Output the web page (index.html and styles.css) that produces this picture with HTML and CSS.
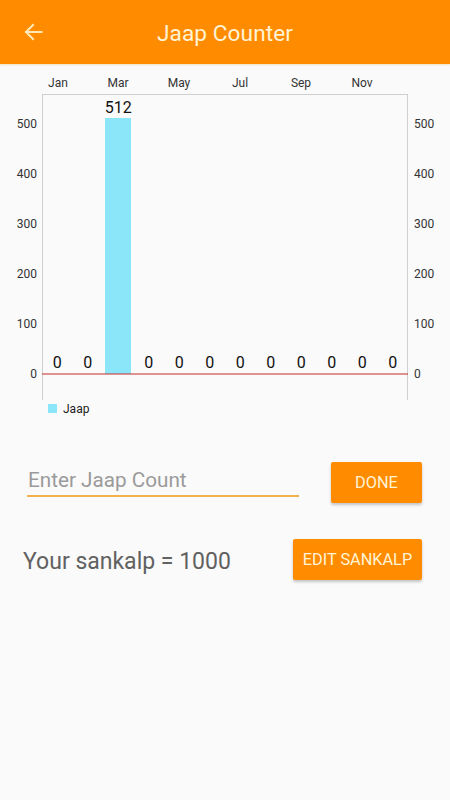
FILE: index.html
```html
<!DOCTYPE html>
<html>
<head>
<meta charset="utf-8">
<link rel="stylesheet" href="styles.css">
</head>
<body>
<header class="appbar">
  <svg class="back" width="20" height="20" viewBox="0 0 20 20"><path d="M18.5 10H3M10 3L3 10L10 17" fill="none" stroke="#FFE9B8" stroke-width="2" stroke-linecap="square"/></svg>
  <h1 class="title">Jaap Counter</h1>
</header>
<main class="content">
  <svg class="chart" width="450" height="360" viewBox="0 64 450 360">
    <g class="months">
      <text x="58" y="87">Jan</text>
      <text x="118" y="87">Mar</text>
      <text x="179" y="87">May</text>
      <text x="240" y="87">Jul</text>
      <text x="301" y="87">Sep</text>
      <text x="362" y="87">Nov</text>
    </g>
    <line x1="42" y1="94.5" x2="408" y2="94.5" stroke="#cfcfcf" stroke-width="1"/>
    <line x1="42.5" y1="94" x2="42.5" y2="400" stroke="#cfcfcf" stroke-width="1"/>
    <line x1="407.5" y1="94" x2="407.5" y2="400" stroke="#cfcfcf" stroke-width="1"/>
    <g class="yl">
      <text x="37" y="128">500</text>
      <text x="37" y="178">400</text>
      <text x="37" y="228">300</text>
      <text x="37" y="278">200</text>
      <text x="37" y="328">100</text>
      <text x="37" y="378">0</text>
    </g>
    <g class="yr">
      <text x="414" y="128">500</text>
      <text x="414" y="178">400</text>
      <text x="414" y="228">300</text>
      <text x="414" y="278">200</text>
      <text x="414" y="328">100</text>
      <text x="414" y="378">0</text>
    </g>
    <rect x="105" y="118" width="26" height="256" fill="#8BE6FA"/>
    <line x1="42" y1="374" x2="408" y2="374" stroke="#C62828" stroke-width="1.2"/>
    <g class="vals">
      <text x="57.3" y="368">0</text>
      <text x="87.8" y="368">0</text>
      <text x="118.3" y="113">512</text>
      <text x="148.8" y="368">0</text>
      <text x="179.3" y="368">0</text>
      <text x="209.8" y="368">0</text>
      <text x="240.3" y="368">0</text>
      <text x="270.8" y="368">0</text>
      <text x="301.3" y="368">0</text>
      <text x="331.8" y="368">0</text>
      <text x="362.3" y="368">0</text>
      <text x="392.8" y="368">0</text>
    </g>
    <rect x="48" y="404" width="9" height="9" fill="#8BE6FA"/>
    <text class="legend" x="63" y="413">Jaap</text>
  </svg>
  <div class="row row-input">
    <div class="field"><span class="placeholder">Enter Jaap Count</span></div>
    <button class="btn btn-done">DONE</button>
  </div>
  <div class="row row-sankalp">
    <span class="sankalp">Your sankalp = 1000</span>
    <button class="btn btn-edit">EDIT SANKALP</button>
  </div>
</main>
</body>
</html>
```
FILE: styles.css
```css
* { box-sizing: border-box; }
html, body { margin: 0; padding: 0; }
body {
  width: 450px;
  height: 800px;
  background: #FAFAFA;
  font-family: Roboto, "Noto Sans", sans-serif;
  overflow: hidden;
}
.appbar {
  height: 64px;
  background: #FF8C00;
  display: flex;
  align-items: center;
  position: relative;
  box-shadow: 0 1px 2px rgba(200, 150, 0, 0.25);
}
.back {
  position: absolute;
  left: 23px;
  top: 22px;
}
.title {
  margin: 0;
  width: 100%;
  text-align: center;
  font-size: 22.6px;
  font-weight: 400;
  color: #FFF3D6;
  letter-spacing: 0.1px;
  padding-top: 3px;
}
.content { display: flex; flex-direction: column; }
.chart { display: block; }
.chart text { font-family: Roboto, sans-serif; }
.months text { font-size: 12px; fill: #333; text-anchor: middle; }
.yl text { font-size: 12px; fill: #333; text-anchor: end; }
.yr text { font-size: 12px; fill: #333; text-anchor: start; }
.vals text { font-size: 16px; fill: #111; text-anchor: middle; }
.legend { font-size: 12px; fill: #222; }
.row {
  display: flex;
  align-items: center;
  justify-content: space-between;
}
.row-input {
  padding: 38px 28px 0 27px;
  height: 115px;
  align-items: flex-start;
}
.field {
  width: 272px;
  height: 35px;
  border-bottom: 2px solid #F3B04C;
  display: flex;
  align-items: flex-end;
  padding: 0 0 3px 1px;
}
.placeholder {
  font-size: 20.7px;
  color: #9A9A9A;
  line-height: 24px;
}
.btn {
  border: none;
  background: #FF8C00;
  color: #FFF3D6;
  font-family: Roboto, sans-serif;
  font-size: 16.3px;
  font-weight: 400;
  border-radius: 2px;
  box-shadow: 0 2px 3px rgba(0,0,0,0.22);
  padding: 0;
}
.btn-done {
  width: 91px;
  height: 41px;
}
.row-sankalp {
  padding: 0 28px 0 23px;
  height: 41px;
}
.sankalp {
  font-size: 23px;
  color: #616161;
  padding-top: 3px;
}
.btn-edit {
  width: 129px;
  height: 41px;
}
```
